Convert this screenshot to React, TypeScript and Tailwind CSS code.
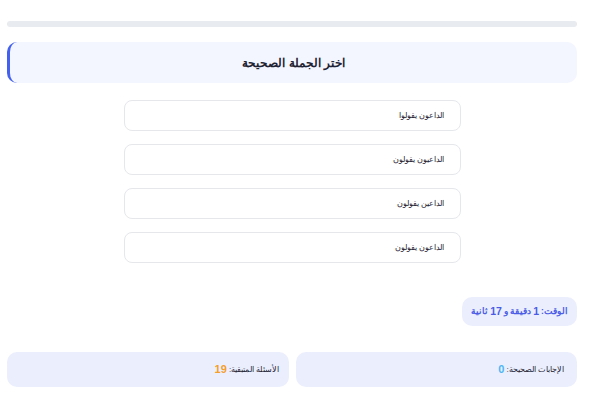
import React from "react";

const options = ["الداعون يقولوا", "الداعيون يقولون", "الداعين يقولون", "الداعون يقولون"];

export default function App() {
  return (
    <div
      dir="rtl"
      className="min-h-screen bg-white pt-[21px] pl-[7px] pr-[12px] font-['Liberation_Sans',sans-serif] text-[#111827]"
    >
      {/* progress */}
      <div className="h-[6px] w-full rounded-full bg-[#e8ebef]" />

      {/* question */}
      <div className="mt-[15px] flex h-[41px] items-center justify-center rounded-[10px] border-l-[3px] border-[#4361ee] bg-[#f3f6fe]">
        <h2 className="text-[12px] font-bold text-[#1f2333]">اختر الجملة الصحيحة</h2>
      </div>

      {/* options */}
      <div className="mx-auto mt-[17px] flex w-[337px] flex-col gap-[13px]">
        {options.map((o, i) => (
          <button
            key={i}
            className="flex h-[31px] items-center rounded-[8px] border border-[#e5e7eb] bg-white pr-[15px] text-right text-[7.8px] text-[#1f2333]"
          >
            {o}
          </button>
        ))}
      </div>

      {/* timer */}
      <div className="mt-[34px] flex">
        <div className="flex h-[29px] w-[115px] items-center justify-center whitespace-nowrap rounded-[10px] bg-[#ebeffd] text-[8.5px] font-bold text-[#4a5ce6]">
          الوقت: <span className="mx-[2px] text-[10.5px]">1</span> دقيقة و <span className="mx-[2px] text-[10.5px]">17</span> ثانية
        </div>
      </div>

      {/* stats */}
      <div className="mt-[26px] grid grid-cols-2 gap-[7px]">
        <div className="flex h-[35px] items-center whitespace-nowrap rounded-[10px] bg-[#ebeffd] pr-[13px] text-[8px] text-[#1f2333]">
          الإجابات الصحيحة:&nbsp;<span className="text-[11px] font-bold text-[#4db5f5]">0</span>
        </div>
        <div className="flex h-[35px] items-center whitespace-nowrap rounded-[10px] bg-[#ebeffd] pr-[9px] text-[8px] text-[#1f2333]">
          الأسئلة المتبقية:&nbsp;<span className="text-[11px] font-bold text-[#f59e2b]">19</span>
        </div>
      </div>
    </div>
  );
}
